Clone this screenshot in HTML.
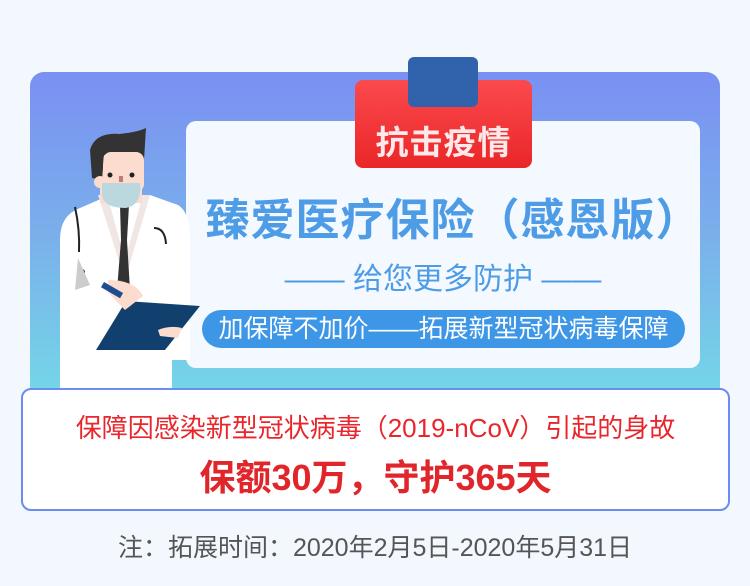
<!DOCTYPE html>
<html><head><meta charset="utf-8"><style>
*{margin:0;padding:0;box-sizing:border-box}
body{width:750px;height:586px;background:#f2f8fe;position:relative;overflow:hidden;font-family:"Liberation Sans","Noto Sans CJK SC",sans-serif}
.panel{position:absolute;left:30px;top:72px;width:690px;height:330px;border-radius:14px 14px 0 0;background:linear-gradient(#7a90f3 0%,#7ab0ea 50%,#74d8e8 100%)}
.card{position:absolute;left:186px;top:121px;width:514px;height:247px;background:#f4f9ff;border-radius:10px}
.clip{position:absolute;left:408px;top:57px;width:70px;height:50px;background:#3163ac;border-radius:6px;z-index:3}
.clip2{position:absolute;left:419px;top:95px;width:48px;height:12px;background:#1d5a93;border-radius:0 0 6px 6px;z-index:2}
.tag{position:absolute;left:355px;top:80px;width:177px;height:88px;background:linear-gradient(#fb4a4e,#ea2628);border-radius:8px;z-index:1;color:#fde8ea;font-weight:bold;font-size:33px;text-align:center;padding-top:36px;letter-spacing:1px}
.t1{position:absolute;left:196px;top:184px;width:514px;text-align:center;color:#4e9be6;font-size:44px;font-weight:bold;letter-spacing:1px;white-space:nowrap}
.t2{position:absolute;left:186px;top:254px;width:514px;text-align:center;color:#4e9be6;font-size:30px;white-space:nowrap}
.pill{position:absolute;left:202px;top:310px;width:483px;height:38px;background:#3e97e6;border-radius:19px;color:#fff;font-size:25px;text-align:center;line-height:38px;white-space:nowrap}
.box{position:absolute;left:21px;top:388px;width:709px;height:123px;background:#fff;border:2px solid #6b8cf1;border-radius:10px}
.b1{position:absolute;left:21px;top:408px;width:709px;text-align:center;color:#e8262b;font-size:26px;white-space:nowrap}
.b2{position:absolute;left:21px;top:449px;width:709px;text-align:center;color:#e0262a;font-size:36px;font-weight:bold;white-space:nowrap}
.note{position:absolute;left:0;top:528px;width:750px;text-align:center;color:#555;font-size:25px;white-space:nowrap}
</style></head><body>
<div class="panel"></div>
<div class="card"></div>
<svg style="position:absolute;left:48px;top:128px;z-index:4" width="160" height="260" viewBox="48 128 160 260">
<path d="M60 390 L60 240 Q60 215 80 208 L110 195 L150 195 L178 205 Q190 212 190 240 L190 360 L172 360 L172 390Z" fill="#fff"/>
<path d="M98 195 L125 280 L150 195Z" fill="#f0e6e3"/>
<path d="M108 198 L125 260 L142 198Z" fill="#fff"/>
<path d="M120 205 L124 200 L129 205 L127 240 L130 290 L123 296 L117 290 L121 240Z" fill="#333"/>
<rect x="100" y="165" width="42" height="38" fill="#fbdcce"/>
<path d="M90 150 Q95 132 120 134 Q138 132 146 128 L144 160 L104 155 L102 180 L92 178Z" fill="#333"/>
<rect x="103" y="152" width="41" height="40" rx="8" fill="#fbdcce"/>
<path d="M92 150 L104 152 L102 178 L92 176Z" fill="#333"/>
<circle cx="100" cy="182" r="6" fill="#fbdcce"/>
<path d="M102 183 L140 183 Q142 206 125 208 Q104 208 102 195Z" fill="#bad8dd"/>
<circle cx="110" cy="175" r="2.5" fill="#222"/><circle cx="132" cy="175" r="2.5" fill="#222"/>
<rect x="119" y="176" width="4" height="6" fill="#c47a6c"/>
<path d="M126 301 L200 306 L165 350 L96 350Z" fill="#12406e"/>
<path d="M158 330 Q170 325 182 328 L178 338 L160 336Z" fill="#fbdcce"/>
<path d="M108 280 Q135 280 143 296 L125 310 Q115 300 108 292Z" fill="#fbdcce"/>
<rect x="104" y="282" width="22" height="6" transform="rotate(30 104 282)" fill="#1c4d8e"/>
<path d="M154 228 Q165 228 166 244" stroke="#222" stroke-width="2" fill="none"/>
<path d="M75 207 Q80 230 79 252" stroke="#222" stroke-width="2" fill="none"/>
<circle cx="82" cy="272" r="3" fill="#12406e"/>
<path d="M78 258 L75 290 L90 285" fill="#ccc"/>
</svg>
<div class="clip"></div><div class="clip2"></div>
<div class="tag">抗击疫情</div>
<div class="t1">臻爱医疗保险（感恩版）</div>
<div class="t2">—— 给您更多防护 ——</div>
<div class="pill">加保障不加价——拓展新型冠状病毒保障</div>
<div class="box"></div>
<div class="b1">保障因感染新型冠状病毒（2019-nCoV）引起的身故</div>
<div class="b2">保额30万，守护365天</div>
<div class="note">注：拓展时间：2020年2月5日-2020年5月31日</div>
</body></html>
